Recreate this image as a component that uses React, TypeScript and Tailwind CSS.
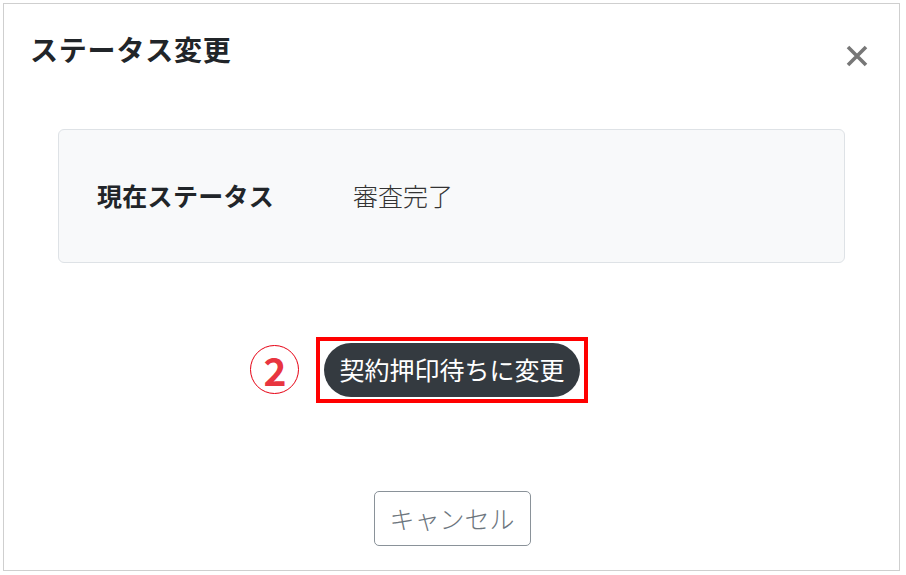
const FONT = "font-['Noto_Sans_CJK_JP','Noto_Sans',sans-serif]";

function CloseIcon() {
  return (
    <svg width="22" height="22" viewBox="0 0 22 22" aria-hidden="true">
      <path d="M2 2 L20 20 M20 2 L2 20" stroke="#777777" strokeWidth="3.6" strokeLinecap="butt" />
    </svg>
  );
}

export default function App() {
  return (
    <div className={`h-[575px] w-[906px] bg-white p-[3px] ${FONT}`}>
      <div className="flex h-[568px] w-[897px] flex-col border border-[#cfcfcf] bg-white">
        <div className="flex items-start justify-between pl-[26px] pr-[31px] pt-[25px]">
          <h2 className="text-[28px] font-bold leading-[40px] tracking-[0.8px] text-[#212529]">ステータス変更</h2>
          <button type="button" className="mt-[16px]" aria-label="閉じる">
            <CloseIcon />
          </button>
        </div>

        <div className="mx-[54px] mt-[60px] flex h-[134px] items-center rounded-[6px] border border-[#dee2e6] bg-[#f8f9fa] pl-[38px]">
          <span className="w-[256px] text-[25px] font-bold tracking-[0.3px] text-[#212529]">現在ステータス</span>
          <span className="text-[25px] font-light text-[#333333]">審査完了</span>
        </div>

        <div className="mt-[74px] flex justify-center">
          <div className="relative">
            <span className="absolute left-[-65px] top-[8px] flex h-[49px] w-[49px] items-center justify-center rounded-full border border-[#e60012] text-[39px] font-bold leading-none text-[#e8353f]">
              2
            </span>
            <div className="ml-[1px] border-[4px] border-[#ff0000] px-[4px] py-[2px]">
              <button
                type="button"
                className="h-[54px] rounded-full bg-[#343a40] px-[15px] text-[25px] text-white"
              >
                契約押印待ちに変更
              </button>
            </div>
          </div>
        </div>

        <div className="mt-[88px] flex justify-center">
          <button
            type="button"
            className="ml-[1px] h-[55px] w-[157px] rounded-[5px] border border-[#8a9299] text-[25px] font-light text-[#6c757d]"
          >
            キャンセル
          </button>
        </div>
      </div>
    </div>
  );
}
